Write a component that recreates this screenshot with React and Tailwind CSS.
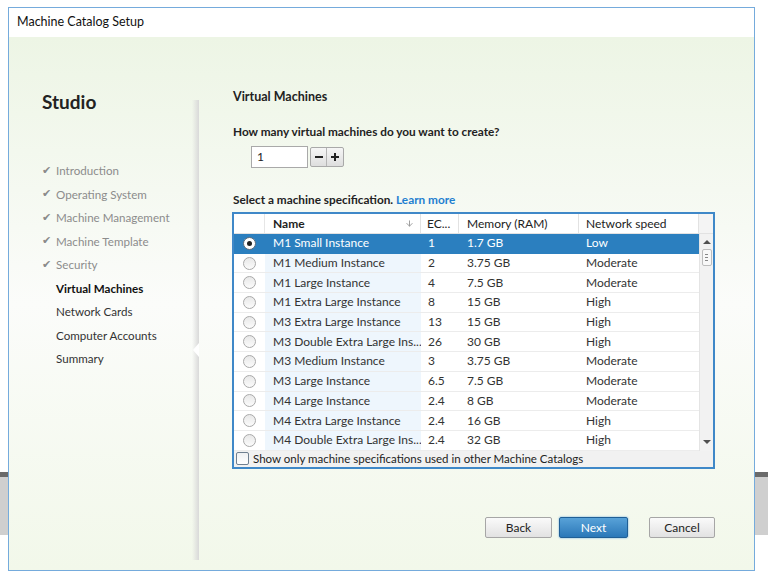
import { ArrowDown } from 'lucide-react'

const FONT = { fontFamily: 'Lato, "Noto Sans", sans-serif' }

const STEPS = [
  { label: 'Introduction', done: true },
  { label: 'Operating System', done: true },
  { label: 'Machine Management', done: true },
  { label: 'Machine Template', done: true },
  { label: 'Security', done: true },
  { label: 'Virtual Machines', current: true },
  { label: 'Network Cards' },
  { label: 'Computer Accounts' },
  { label: 'Summary' },
]

const ROWS = [
  ['M1 Small Instance', '1', '1.7 GB', 'Low'],
  ['M1 Medium Instance', '2', '3.75 GB', 'Moderate'],
  ['M1 Large Instance', '4', '7.5 GB', 'Moderate'],
  ['M1 Extra Large Instance', '8', '15 GB', 'High'],
  ['M3 Extra Large Instance', '13', '15 GB', 'High'],
  ['M3 Double Extra Large Ins...', '26', '30 GB', 'High'],
  ['M3 Medium Instance', '3', '3.75 GB', 'Moderate'],
  ['M3 Large Instance', '6.5', '7.5 GB', 'Moderate'],
  ['M4 Large Instance', '2.4', '8 GB', 'Moderate'],
  ['M4 Extra Large Instance', '2.4', '16 GB', 'High'],
  ['M4 Double Extra Large Ins...', '2.4', '32 GB', 'High'],
]

function Radio({ checked }) {
  return (
    <span className={`w-[13px] h-[13px] rounded-full border flex items-center justify-center ${
      checked ? 'border-[#5a6a7a] bg-white' : 'border-[#a9a9a9] bg-gradient-to-b from-[#e8e8e8] to-[#fbfbfb]'
    }`}>
      {checked && <span className="w-[5px] h-[5px] rounded-full bg-[#222]" />}
    </span>
  )
}

function Sidebar() {
  return (
    <div className="w-[185px] flex flex-col pl-[33px] pt-[53px]">
      <div className="text-[19px] font-bold leading-[24px] text-[#222]">Studio</div>
      <div className="mt-[45px] flex flex-col">
        {STEPS.map(s => (
          <div key={s.label} className="h-[23.5px] flex items-center text-[11.6px] whitespace-nowrap">
            <span className="w-[14px] text-[11px] text-[#8a8a8a]" style={{ fontFamily: '"DejaVu Sans", sans-serif' }}>
              {s.done ? '✔' : ''}
            </span>
            <span className={s.done ? 'text-[#8c8c8c]' : s.current ? 'font-bold text-[#111]' : 'text-[#333]'}>
              {s.label}
            </span>
          </div>
        ))}
      </div>
    </div>
  )
}

function SpecTable() {
  return (
    <div className="mt-[4px] -ml-px w-[483px] border-2 border-[#3f88c8] bg-white flex flex-col text-[12px] whitespace-nowrap">
      {/* header */}
      <div className="flex h-[20px] items-stretch text-[#222] border-b border-[#e2e2e2]">
        <div className="w-[31px] border-r border-[#e6e6e6]" />
        <div className="w-[156px] flex items-center justify-between pl-[8px] pr-[6px] border-r border-[#e2e2e2] font-bold">
          <span>Name</span>
          <ArrowDown size={9} strokeWidth={2.5} className="text-[#999]" />
        </div>
        <div className="w-[38px] flex items-center pl-[6px] border-r border-[#e2e2e2]">EC...</div>
        <div className="w-[120px] flex items-center pl-[8px] border-r border-[#e2e2e2]">Memory (RAM)</div>
        <div className="w-[120px] flex items-center pl-[7px] border-r border-[#e2e2e2]">Network speed</div>
        <div className="w-[14px] bg-[#f4f4f4]" />
      </div>
      {/* body */}
      <div className="flex">
        <div className="flex flex-col w-[465px]">
          {ROWS.map((r, i) => {
            const sel = i === 0
            return (
              <div key={r[0]} className={`flex h-[19.7px] items-stretch border-b ${sel ? 'bg-[#2b7fbf] text-white border-[#2b7fbf]' : 'text-[#333] border-[#ececec]'}`}>
                <div className="w-[31px] flex items-center justify-center">
                  <Radio checked={sel} />
                </div>
                <div className={`w-[156px] flex items-center pl-[8px] overflow-hidden ${sel ? '' : 'bg-[#eef6fd]'}`}>{r[0]}</div>
                <div className="w-[38px] flex items-center pl-[7px]">{r[1]}</div>
                <div className="w-[120px] flex items-center pl-[8px]">{r[2]}</div>
                <div className="w-[120px] flex items-center pl-[7px]">{r[3]}</div>
              </div>
            )
          })}
        </div>
        {/* scrollbar */}
        <div className="w-[14px] bg-[#f2f2f2] flex flex-col items-center border-l border-[#e4e4e4]">
          <span className="mt-[6px] w-0 h-0 border-l-[4px] border-r-[4px] border-b-[4px] border-transparent border-b-[#505050]" />
          <span className="mt-[5px] w-[10px] h-[17px] border border-[#bdbdbd] bg-[#f8f8f8] rounded-[2px] flex flex-col items-center justify-center gap-[2px]">
            <span className="w-[3px] h-px bg-[#888]" />
            <span className="w-[3px] h-px bg-[#888]" />
            <span className="w-[3px] h-px bg-[#888]" />
          </span>
          <span className="mt-auto mb-[7px] w-0 h-0 border-l-[4px] border-r-[4px] border-t-[4px] border-transparent border-t-[#505050]" />
        </div>
      </div>
      {/* filter */}
      <div className="h-[16px] bg-[#f1f1f1] flex items-center gap-[4px] pl-[2px] text-[#222] text-[11.5px]">
        <span className="w-[13px] h-[13px] border border-[#6f7f90] rounded-[2px] bg-gradient-to-b from-[#eef0f2] to-white" />
        <span>Show only machine specifications used in other Machine Catalogs</span>
      </div>
    </div>
  )
}

function Btn({ children, primary, className = '' }) {
  return (
    <button
      type="button"
      className={`h-[21px] text-[12px] rounded-[2px] border ${
        primary
          ? 'border-[#1f5f96] bg-gradient-to-b from-[#58a2d8] to-[#2a78b8] text-white shadow-[0_0_2px_#5aa0dc]'
          : 'border-[#a6a6a6] bg-gradient-to-b from-[#fafafa] to-[#e2e2e2] text-[#222]'
      } ${className}`}
    >
      {children}
    </button>
  )
}

export default function App() {
  return (
    <div className="relative w-[768px] h-[580px] bg-white overflow-hidden" style={FONT}>
      {/* desktop strips behind the dialog */}
      <div className="absolute left-0 top-[472px] w-[768px] h-[63px] bg-[#cfcfcf] border-t-[5px] border-[#6a6a6a]" />

      <div className="relative ml-[8px] mt-[7px] w-[747px] h-[564px] border border-[#75abdc] flex flex-col bg-white">
        {/* title bar */}
        <div className="h-[29px] flex items-center pl-[8px] text-[12.5px] text-[#111]">Machine Catalog Setup</div>

        <div className="flex-1 flex bg-gradient-to-b from-[#edf5e5] via-[#fbfcfa] to-[#f2f8ea]">
          <Sidebar />

          {/* sidebar shadow + notch */}
          <div className="relative w-[7px] mt-[63px] mb-[10px] bg-gradient-to-r from-transparent to-[#d9d9d9]">
            <span className="absolute right-0 top-[243px] w-0 h-0 border-t-[7px] border-b-[7px] border-r-[6px] border-transparent border-r-white" />
          </div>

          {/* main panel */}
          <div className="flex-1 flex flex-col pl-[34px] pt-[52px] pr-[39px] pb-[32px] text-[#222]">
            <div className="text-[12.5px] font-bold leading-[16px]">Virtual Machines</div>
            <div className="mt-[19px] text-[11.8px] font-bold leading-[16px]">How many virtual machines do you want to create?</div>
            <div className="mt-[6px] ml-[18px] flex items-center gap-[2px]">
              <div className="w-[57px] h-[22px] border border-[#a9a9a9] bg-white flex items-center pl-[5px] text-[12px]">1</div>
              <div className="flex h-[20px] border border-[#a9a9a9] rounded-[2px] bg-gradient-to-b from-[#f6f6f6] to-[#dedede]">
                <span className="w-[16px] flex items-center justify-center border-r border-[#b5b5b5]">
                  <span className="w-[8px] h-[2px] bg-[#222]" />
                </span>
                <span className="w-[16px] flex items-center justify-center relative">
                  <span className="w-[8px] h-[2px] bg-[#222]" />
                  <span className="absolute w-[2px] h-[8px] bg-[#222]" />
                </span>
              </div>
            </div>
            <div className="mt-[24px] text-[11.8px] font-bold leading-[16px]">
              Select a machine specification. <span className="text-[#1f7fd0]">Learn more</span>
            </div>
            <SpecTable />

            <div className="mt-auto flex justify-end items-center">
              <Btn className="w-[67px]">Back</Btn>
              <Btn primary className="w-[69px] ml-[7px]">Next</Btn>
              <Btn className="w-[66px] ml-[21px]">Cancel</Btn>
            </div>
          </div>
        </div>
      </div>
    </div>
  )
}
